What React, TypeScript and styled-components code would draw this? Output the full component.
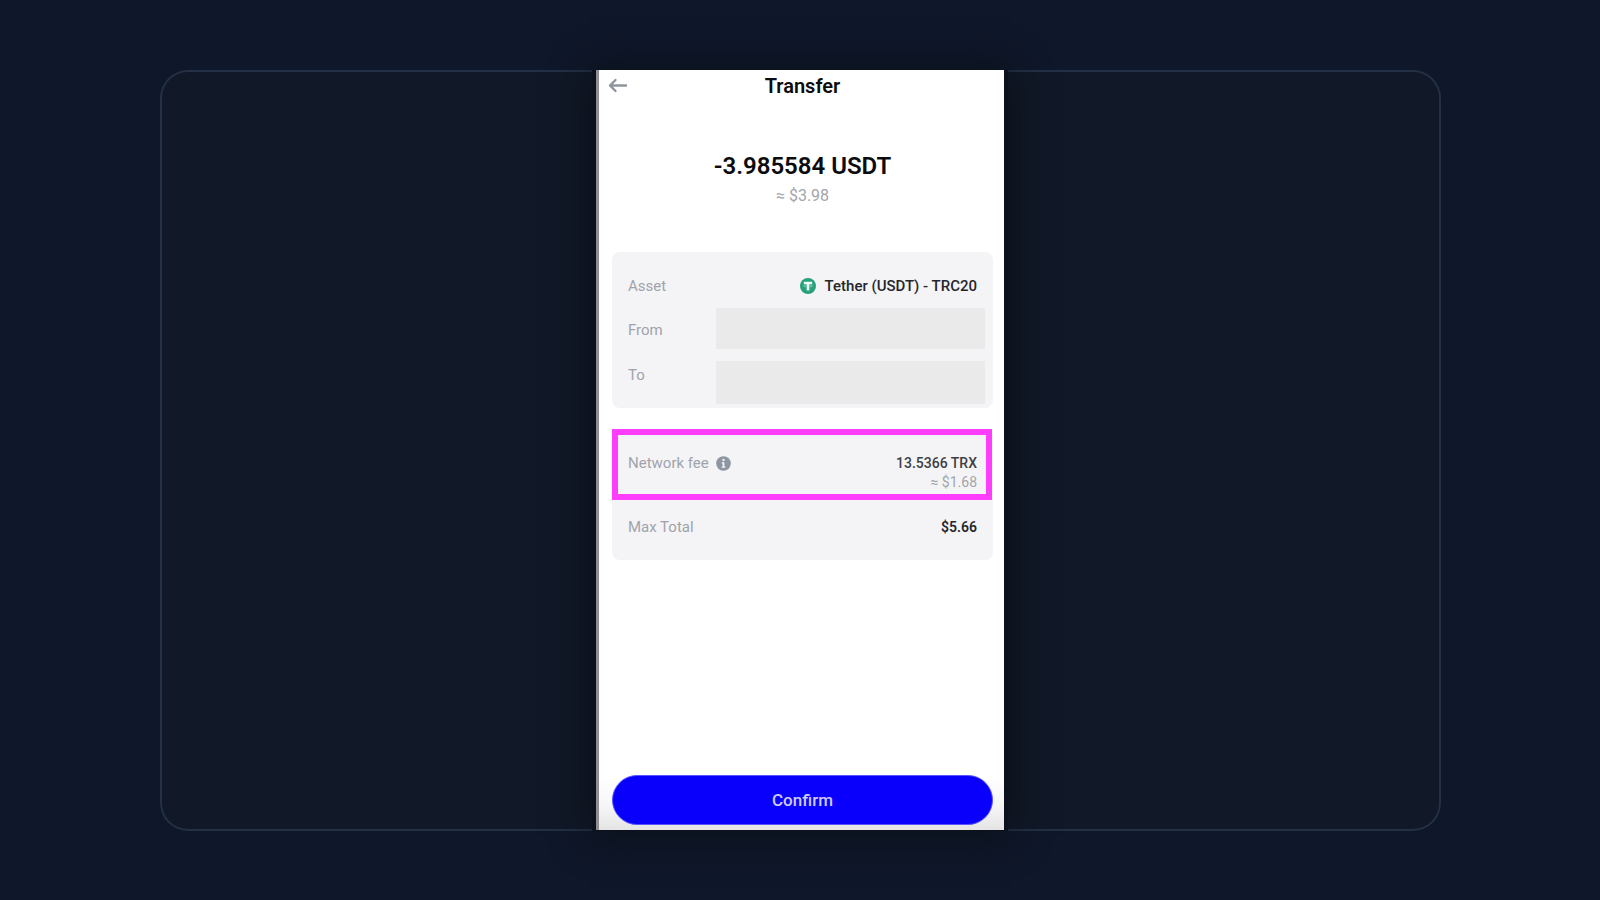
import React from "react";
import styled, { createGlobalStyle } from "styled-components";

const GlobalStyle = createGlobalStyle`
  *, *::before, *::after { box-sizing: border-box; }
  body {
    margin: 0;
    background: #0f172a;
    font-family: Roboto, "Liberation Sans", sans-serif;
  }
`;

const Page = styled.main`
  display: flex;
  min-height: 100vh;
  padding: 70px 10%;
`;

const Stage = styled.section`
  flex: 1;
  display: flex;
  justify-content: center;
  margin: 0 -1px -1px 0;
  border-radius: 28px;
  background: #111827;
  box-shadow: inset 0 0 0 2px #233046;
`;

const Frame = styled.div`
  display: flex;
  margin-right: 1px;
  padding: 0 4px 1px;
  background: #0c121d;
  box-shadow: 0 2px 36px 2px rgba(10, 15, 22, 0.9);
`;

const Phone = styled.article`
  display: flex;
  flex-direction: column;
  width: 408px;
  padding: 0 11px 5px 13px;
  border-left: 3px solid #8e8e90;
  background: linear-gradient(to top, #e4e4e4, #f6f6f6 24px, #ffffff 52px);
`;

const TopBar = styled.header`
  display: grid;
  grid-template-columns: 32px 1fr 32px;
  align-items: center;
  height: 32px;
`;

const BackButton = styled.button`
  display: flex;
  align-items: center;
  width: 32px;
  height: 32px;
  padding: 0;
  margin-left: -4px;
  border: 0;
  background: transparent;
  color: #8f959e;
  cursor: pointer;
`;

const Title = styled.h1`
  margin: 0;
  text-align: center;
  font-size: 20px;
  font-weight: 600;
  line-height: 32px;
  color: #0c0c0e;
`;

const Summary = styled.div`
  display: flex;
  flex-direction: column;
  align-items: center;
  padding: 48px 0 42px;
`;

const Amount = styled.strong`
  font-size: 24px;
  font-weight: 600;
  line-height: 32px;
  color: #0c0c0e;
`;

const Estimate = styled.span<{ $large?: boolean }>`
  font-size: ${(p) => (p.$large ? 16 : 14)}px;
  line-height: ${(p) => (p.$large ? 28 : 18)}px;
  color: #a3a5ab;
`;

const Group = styled.dl<{ $top?: number }>`
  margin: 0;
  padding: ${(p) => p.$top ?? 0}px 0 4px;
  border-radius: 8px;
  background: #f4f4f6;
`;

const Row = styled.div<{ $gap?: number }>`
  display: flex;
  justify-content: space-between;
  align-items: flex-start;
  padding: 0 16px;
  margin-bottom: ${(p) => p.$gap ?? 0}px;
`;

const Label = styled.dt<{ $line?: number }>`
  display: flex;
  align-items: center;
  gap: 7px;
  font-size: 15px;
  line-height: ${(p) => p.$line ?? 44}px;
  color: #a0a3ab;
`;

const Value = styled.dd<{ $line?: number; $total?: boolean }>`
  display: flex;
  align-items: center;
  gap: 9px;
  margin: 0;
  font-size: ${(p) => (p.$total ? 14 : 15)}px;
  font-weight: ${(p) => (p.$total ? 600 : 500)};
  line-height: ${(p) => p.$line ?? 44}px;
  color: #25262b;
`;

const Redacted = styled.dd<{ $height: number }>`
  width: 269px;
  height: ${(p) => p.$height}px;
  margin: 0 -8px 0 0;
  background: #eaeaea;
`;

const FeeGroup = styled(Group)`
  margin-top: 21px;
  padding: 0 0 6px;
`;

const Highlight = styled(Row)`
  height: 71px;
  margin-right: 1px;
  padding: 18px 9px 0 10px;
  border: 6px solid #ff3dfc;
`;

const Stack = styled.dd`
  display: flex;
  flex-direction: column;
  align-items: flex-end;
  margin: 0;
`;

const Fee = styled.span`
  font-size: 14px;
  font-weight: 500;
  line-height: 20px;
  color: #3e3f44;
`;

const InfoButton = styled.button`
  display: flex;
  padding: 0;
  border: 0;
  background: transparent;
  cursor: pointer;
`;

const ConfirmButton = styled.button`
  width: 100%;
  height: 50px;
  margin-top: auto;
  border: 1px solid #5a54ff;
  border-radius: 25px;
  background: #0800fa;
  color: #cfcaff;
  font-family: inherit;
  font-size: 17px;
  font-weight: 500;
  cursor: pointer;
`;

const BackIcon = () => (
  <svg width="20" height="16" viewBox="0 0 20 16" fill="none" stroke="currentColor" strokeWidth="2.4" strokeLinecap="round" strokeLinejoin="round" aria-hidden="true">
    <path d="M18 7.500H2M7.500 2 2 7.500l5.500 5.500" />
  </svg>
);

const TetherIcon = () => (
  <svg width="16" height="16" viewBox="0 0 16 16" aria-hidden="true">
    <circle cx="8" cy="8" r="8" fill="#26a17b" />
    <path d="M3.800 3.800h8.400v2.500H9.300v6.200H6.700V6.300H3.800z" fill="#eefaf6" />
    <path d="M6.700 7.200C4.700 7.300 3.400 7.600 3.400 8s1.500.8 3.300.9M9.300 7.200c2 .1 3.300.4 3.300.8s-1.500.8-3.300.9" fill="none" stroke="#a8d9c8" strokeWidth=".6" />
  </svg>
);

const InfoIcon = () => (
  <svg width="15" height="15" viewBox="0 0 15 15" aria-hidden="true">
    <circle cx="7.500" cy="7.500" r="7.300" fill="#8d95a1" />
    <circle cx="7.500" cy="4" r="1.200" fill="#f4f4f6" />
    <path d="M5.700 6.200h2.700v4.300h1v1.200H5.600v-1.200h1V7.400h-.9z" fill="#f4f4f6" />
  </svg>
);

export default function App() {
  return (
    <>
      <GlobalStyle />
      <Page>
        <Stage>
          <Frame>
            <Phone>
              <TopBar>
                <BackButton aria-label="Back">
                  <BackIcon />
                </BackButton>
                <Title>Transfer</Title>
              </TopBar>
              <Summary>
                <Amount>-3.985584 USDT</Amount>
                <Estimate $large>≈ $3.98</Estimate>
              </Summary>
              <Group $top={12}>
                <Row>
                  <Label>Asset</Label>
                  <Value>
                    <TetherIcon />
                    Tether (USDT) - TRC20
                  </Value>
                </Row>
                <Row $gap={9}>
                  <Label>From</Label>
                  <Redacted $height={41} />
                </Row>
                <Row>
                  <Label $line={28}>To</Label>
                  <Redacted $height={43} />
                </Row>
              </Group>
              <FeeGroup>
                <Highlight>
                  <Label $line={20}>
                    Network fee
                    <InfoButton aria-label="About the network fee">
                      <InfoIcon />
                    </InfoButton>
                  </Label>
                  <Stack>
                    <Fee>13.5366 TRX</Fee>
                    <Estimate>≈ $1.68</Estimate>
                  </Stack>
                </Highlight>
                <Row>
                  <Label $line={54}>Max Total</Label>
                  <Value $line={54} $total>$5.66</Value>
                </Row>
              </FeeGroup>
              <ConfirmButton>Confirm</ConfirmButton>
            </Phone>
          </Frame>
        </Stage>
      </Page>
    </>
  );
}
